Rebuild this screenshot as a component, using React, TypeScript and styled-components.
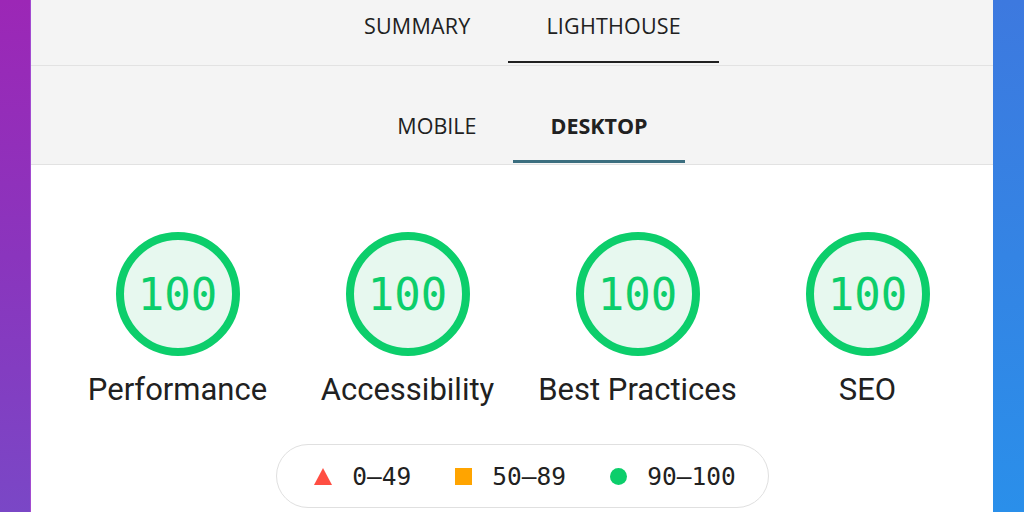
import styled, { createGlobalStyle } from "styled-components";

const GlobalStyle = createGlobalStyle`
  html, body {
    margin: 0;
    padding: 0;
  }
  body {
    width: 1024px;
    height: 512px;
    overflow: hidden;
    font-family: "Open Sans", "Noto Sans", sans-serif;
    color: #212121;
  }
`;

interface Gauge {
  score: number;
  label: string;
}

const gauges: Gauge[] = [
  { score: 100, label: "Performance" },
  { score: 100, label: "Accessibility" },
  { score: 100, label: "Best Practices" },
  { score: 100, label: "SEO" },
];

function ScoreCircle({ score }: { score: number }) {
  return (
    <CircleWrap>
      <svg width="124" height="124" viewBox="0 0 124 124">
        <circle
          cx="62"
          cy="62"
          r="58"
          fill="#e7f8ef"
          stroke="#0cce6b"
          strokeWidth="8"
        />
      </svg>
      <ScoreText>{score}</ScoreText>
    </CircleWrap>
  );
}

function App() {
  return (
    <>
      <GlobalStyle />
      <Page>
        <LeftEdge />
        <Card>
          <TopTabs>
            <TopTab>SUMMARY</TopTab>
            <TopTab active>LIGHTHOUSE</TopTab>
          </TopTabs>
          <SubTabs>
            <SubTab>MOBILE</SubTab>
            <SubTab active>DESKTOP</SubTab>
          </SubTabs>
          <Body>
            <GaugeRow>
              {gauges.map((g) => (
                <GaugeItem key={g.label}>
                  <ScoreCircle score={g.score} />
                  <GaugeLabel>{g.label}</GaugeLabel>
                </GaugeItem>
              ))}
            </GaugeRow>
            <Legend>
              <LegendItem>
                <svg width="18" height="17" viewBox="0 0 18 17">
                  <polygon points="9,0 18,17 0,17" fill="#ff4e42" />
                </svg>
                <LegendText>0–49</LegendText>
              </LegendItem>
              <LegendItem>
                <Square />
                <LegendText>50–89</LegendText>
              </LegendItem>
              <LegendItem>
                <Dot />
                <LegendText>90–100</LegendText>
              </LegendItem>
            </Legend>
          </Body>
        </Card>
        <RightEdge />
      </Page>
    </>
  );
}

export default App;

const Page = styled.div`
  display: grid;
  grid-template-columns: 31px 1fr 31px;
  height: 512px;
`;

const LeftEdge = styled.div`
  background: linear-gradient(180deg, #9c27b6 0%, #8a35bd 50%, #7a47c6 100%);
  border-right: 1px solid #a24bd0;
`;

const RightEdge = styled.div`
  background: linear-gradient(180deg, #3d79df 0%, #3484e4 50%, #2a8fea 100%);
`;

const Card = styled.div`
  background: #ffffff;
  display: flex;
  flex-direction: column;
  overflow: hidden;
`;

const TopTabs = styled.div`
  display: flex;
  justify-content: center;
  padding-left: 21px;
  padding-bottom: 2px;
  background: #f4f4f4;
  border-bottom: 1px solid #e2e2e2;
`;

const TopTab = styled.div<{ active?: boolean }>`
  box-sizing: border-box;
  height: 63px;
  padding: 13px 38px 0;
  font-size: 21.5px;
  line-height: 26px;
  letter-spacing: 0.2px;
  color: #212121;
  border-bottom: 2px solid ${(p) => (p.active ? "#202020" : "transparent")};
`;

const SubTabs = styled.div`
  display: flex;
  justify-content: center;
  padding-left: 21px;
  padding-bottom: 1px;
  background: #f4f4f4;
  border-bottom: 1px solid #e2e2e2;
`;

const SubTab = styled.div<{ active?: boolean }>`
  box-sizing: border-box;
  height: 97px;
  padding: 47px 37px 0;
  font-size: 21.5px;
  line-height: 26px;
  font-weight: ${(p) => (p.active ? 700 : 400)};
  color: #212121;
  border-bottom: 3px solid ${(p) => (p.active ? "#3b6e7f" : "transparent")};
`;

const Body = styled.div`
  display: flex;
  flex-direction: column;
  align-items: center;
  padding-left: 21px;
`;

const GaugeRow = styled.div`
  display: grid;
  grid-template-columns: repeat(4, 230px);
  margin-top: 67px;
`;

const GaugeItem = styled.div`
  display: flex;
  flex-direction: column;
  align-items: center;
`;

const CircleWrap = styled.div`
  position: relative;
  width: 124px;
  height: 124px;

  svg {
    display: block;
  }
`;

const ScoreText = styled.div`
  position: absolute;
  inset: 0;
  display: flex;
  align-items: center;
  justify-content: center;
  font-family: "DejaVu Sans Mono", "Liberation Mono", monospace;
  font-size: 44px;
  color: #0cce6b;
`;

const GaugeLabel = styled.div`
  margin-top: 16px;
  font-family: Roboto, "Noto Sans", sans-serif;
  font-size: 31px;
  line-height: 36px;
  color: #212121;
`;

const Legend = styled.div`
  box-sizing: border-box;
  display: flex;
  align-items: center;
  gap: 44px;
  height: 64px;
  margin-top: 36px;
  padding: 0 32px 0 37px;
  border: 1px solid #e0e0e0;
  border-radius: 32px;
`;

const LegendItem = styled.div`
  display: flex;
  align-items: center;
  gap: 20px;

  svg {
    display: block;
  }
`;

const LegendText = styled.span`
  font-family: "DejaVu Sans Mono", "Liberation Mono", monospace;
  font-size: 24.5px;
  color: #212121;
`;

const Square = styled.span`
  display: block;
  width: 17px;
  height: 17px;
  background: #ffa400;
`;

const Dot = styled.span`
  display: block;
  width: 17px;
  height: 17px;
  border-radius: 50%;
  background: #0cce6b;
`;
